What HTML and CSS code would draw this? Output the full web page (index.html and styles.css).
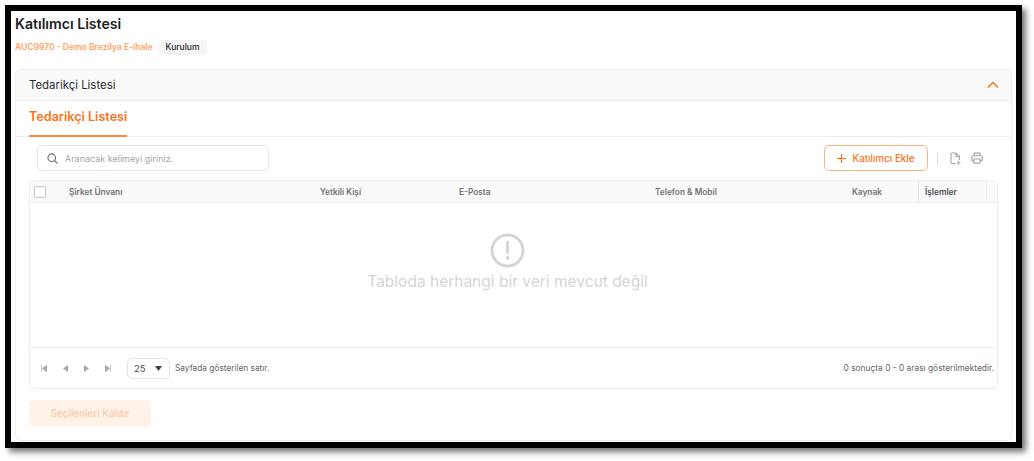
FILE: index.html
```html
<!DOCTYPE html>
<html lang="tr">
<head>
  <meta charset="UTF-8">
  <meta name="viewport" content="width=device-width, initial-scale=1.0">
  <title>Katılımcı Listesi</title>
  <link rel="stylesheet" href="styles.css">
</head>
<body>
  <div class="frame">
    <h1>Katılımcı Listesi</h1>
    <div class="sub">
      <span class="auction">AUC9970 - Demo Brezilya E-ihale</span>
      <span class="tag">Kurulum</span>
    </div>

    <div class="card">
      <div class="card-head">
        <span>Tedarikçi Listesi</span>
        <svg class="chevron" width="12" height="8" viewBox="0 0 12 8"><path d="M1 6.5 L6 1.5 L11 6.5" fill="none" stroke="#f97316" stroke-width="1.5"/></svg>
      </div>
      <div class="tabs">
        <div class="tab">Tedarikçi Listesi</div>
      </div>

      <div class="toolbar">
        <div class="search">
          <svg width="11" height="11" viewBox="0 0 14 14"><circle cx="6" cy="6" r="4.8" fill="none" stroke="#6b6f76" stroke-width="1.5"/><path d="M9.5 9.5 L13.5 13.5" stroke="#6b6f76" stroke-width="1.5"/></svg>
          <span>Aranacak kelimeyi giriniz.</span>
        </div>
        <div class="actions">
          <button class="add">
            <svg width="9" height="9" viewBox="0 0 9 9"><path d="M4.5 0 V9 M0 4.5 H9" stroke="#f97316" stroke-width="1.2"/></svg>
            Katılımcı Ekle
          </button>
          <span class="sep"></span>
          <svg width="11" height="13" viewBox="0 0 11 13"><path d="M6 11.5 H2 Q1 11.5 1 10.5 V2 Q1 1 2 1 H6 L9.5 4.5 V8 M6 1 V4.5 H9.5 M8.5 9 V12.5 M7 10.8 H10.5" fill="none" stroke="#a3a6ab" stroke-width="1.1"/></svg>
          <svg class="print" width="12" height="12" viewBox="0 0 13 13"><path d="M3.2 4 V1.2 H9.8 V4 M3.2 9.6 H1 V5.4 Q1 4 2.4 4 H10.6 Q12 4 12 5.4 V9.6 H9.8 M3.2 7.6 H9.8 V12 H3.2 Z" fill="none" stroke="#a3a6ab" stroke-width="1.2"/></svg>
        </div>
      </div>

      <div class="table">
        <div class="thead">
          <div class="th"><span class="check"></span></div>
          <div class="th">Şirket Ünvanı</div>
          <div class="th">Yetkili Kişi</div>
          <div class="th">E-Posta</div>
          <div class="th">Telefon &amp; Mobil</div>
          <div class="th">Kaynak</div>
          <div class="th ops">İşlemler</div>
          <div class="th spare"></div>
        </div>
        <div class="empty">
          <svg width="35" height="35" viewBox="0 0 36 36"><circle cx="18" cy="18" r="16" fill="none" stroke="#d4d5d9" stroke-width="3"/><path d="M18 9.5 V20" stroke="#d4d5d9" stroke-width="3" stroke-linecap="round"/><circle cx="18" cy="25.5" r="1.9" fill="#d4d5d9"/></svg>
          <p>Tabloda herhangi bir veri mevcut değil</p>
        </div>
        <div class="tfoot">
          <div class="pager">
            <svg width="6" height="7" viewBox="0 0 6 7"><path d="M0.5 0 V7 M6 0 V7 L1.5 3.5 Z" fill="#a3a6ab" stroke="#a3a6ab" stroke-width="0.6"/></svg>
            <svg width="5" height="7" viewBox="0 0 5 7"><path d="M5 0 V7 L0 3.5 Z" fill="#a3a6ab"/></svg>
            <svg width="5" height="7" viewBox="0 0 5 7"><path d="M0 0 V7 L5 3.5 Z" fill="#a3a6ab"/></svg>
            <svg width="6" height="7" viewBox="0 0 6 7"><path d="M5.5 0 V7 M0 0 V7 L4.5 3.5 Z" fill="#a3a6ab" stroke="#a3a6ab" stroke-width="0.6"/></svg>
          </div>
          <div class="size">
            <span>25</span>
            <svg width="7" height="5" viewBox="0 0 7 5"><path d="M0 0 H7 L3.5 5 Z" fill="#3f4147"/></svg>
          </div>
          <span class="rows">Sayfada gösterilen satır.</span>
          <span class="count">0 sonuçta 0 - 0 arası gösterilmektedir.</span>
        </div>
      </div>

      <button class="remove">Seçilenleri Kaldır</button>
    </div>
  </div>
</body>
</html>
```
FILE: styles.css
```css
html, body {
  margin: 0;
  height: 100%;
}
body {
  font-family: 'Inter', 'Liberation Sans', sans-serif;
  background-color: #fff;
  overflow: hidden;
}
.frame {
  box-sizing: border-box;
  width: 1017px;
  height: 443px;
  margin: 5px 0 0 5px;
  padding: 4px 4px 0 4px;
  border: 6px solid #000;
  box-shadow: 4px 4px 6px rgba(0,0,0,0.55);
  background: #fff;
  overflow: hidden;
}
h1 {
  margin: 0;
  font-size: 14.1px;
  line-height: 18px;
  font-weight: 600;
  color: #1c1d21;
}
.sub {
  display: flex;
  align-items: center;
  gap: 6px;
  margin-top: 6px;
  height: 16px;
}
.auction {
  font-size: 8.5px;
  font-weight: 600;
  color: #ffa263;
}
.tag {
  padding: 0 7px;
  line-height: 15px;
  font-size: 8.5px;
  font-weight: 500;
  color: #26282c;
  background: #f4f4f5;
  border-radius: 4px;
}
.card {
  box-sizing: border-box;
  height: 372px;
  margin-top: 14px;
  border: 1px solid #eeeeef;
  border-radius: 6px;
}
.card-head {
  display: flex;
  align-items: center;
  justify-content: space-between;
  height: 30px;
  padding: 0 12px 0 13px;
  font-size: 11.4px;
  color: #2b2c30;
  background: #fafafa;
  border-bottom: 1px solid #eeeeef;
  border-radius: 6px 6px 0 0;
}
.tabs {
  height: 35px;
  padding-left: 13px;
  border-bottom: 1px solid #eeeeef;
}
.tab {
  display: inline-block;
  box-sizing: border-box;
  height: 36px;
  padding-top: 7px;
  font-size: 12.6px;
  line-height: 18px;
  font-weight: 600;
  color: #f97316;
  border-bottom: 2px solid #fa8a42;
}
.toolbar {
  display: flex;
  align-items: center;
  justify-content: space-between;
  padding: 8px 27px 0 21px;
}
.search {
  box-sizing: border-box;
  display: flex;
  align-items: center;
  gap: 7px;
  width: 232px;
  height: 26px;
  padding-left: 9px;
  font-size: 9px;
  color: #a3a6ab;
  border: 1px solid #e4e4e7;
  border-radius: 5px;
}
.actions {
  display: flex;
  align-items: center;
}
.add {
  box-sizing: border-box;
  display: flex;
  align-items: center;
  justify-content: center;
  gap: 6px;
  width: 104px;
  height: 26px;
  padding: 0;
  font-family: inherit;
  font-size: 9.8px;
  font-weight: 500;
  color: #f97316;
  background: #fff;
  border: 1px solid #fbb27f;
  border-radius: 5px;
}
.sep {
  width: 1px;
  height: 13px;
  margin: 0 12px 0 9px;
  background: #dcdcde;
}
.print {
  margin-left: 10px;
  margin-right: 1px;
}
.table {
  box-sizing: border-box;
  height: 209px;
  margin: 9px 13px 0 13px;
  display: flex;
  flex-direction: column;
  border: 1px solid #eeeeef;
  border-radius: 6px;
}
.thead {
  display: grid;
  grid-template-columns: 39px 251px 139px 196px 197px 66px 69px 1fr;
  height: 21px;
  background: #fafafa;
  border-bottom: 1px solid #eeeeef;
  border-radius: 6px 6px 0 0;
}
.th {
  display: flex;
  align-items: center;
  font-size: 8.3px;
  font-weight: 600;
  color: #6f7278;
}
.th.ops {
  padding-left: 6px;
  color: #4a4c52;
  border-left: 1px solid #e4e4e7;
  border-right: 1px solid #eeeeef;
}
.check {
  box-sizing: border-box;
  width: 12px;
  height: 12px;
  margin-left: 4px;
  background: #fff;
  border: 1px solid #c9cacd;
  border-radius: 2px;
}
.empty {
  flex: 1;
  display: flex;
  flex-direction: column;
  align-items: center;
  padding: 30px 12px 0 0;
  border-bottom: 1px solid #eeeeef;
}
.empty p {
  margin: 3px 0 0;
  font-size: 15.5px;
  line-height: 22px;
  color: #d4d5d9;
}
.tfoot {
  display: flex;
  align-items: center;
  height: 40px;
  padding: 0 3px 0 11px;
  font-size: 8.3px;
  color: #63666c;
}
.pager {
  display: flex;
  align-items: center;
  gap: 16px;
}
.size {
  box-sizing: border-box;
  display: flex;
  align-items: center;
  justify-content: space-between;
  width: 43px;
  height: 21px;
  margin: 0 5px 0 16px;
  padding: 0 7px 0 6px;
  font-size: 9.5px;
  color: #4a4c52;
  border: 1px solid #e4e4e7;
  border-radius: 5px;
}
.count {
  margin-left: auto;
  font-size: 8.4px;
}
.remove {
  display: block;
  width: 122px;
  height: 27px;
  margin: 11px 0 0 13px;
  padding: 0;
  font-family: inherit;
  font-size: 9.8px;
  font-weight: 500;
  color: #fdc9a6;
  background: #fff2e9;
  border: 0;
  border-radius: 5px;
}
```
